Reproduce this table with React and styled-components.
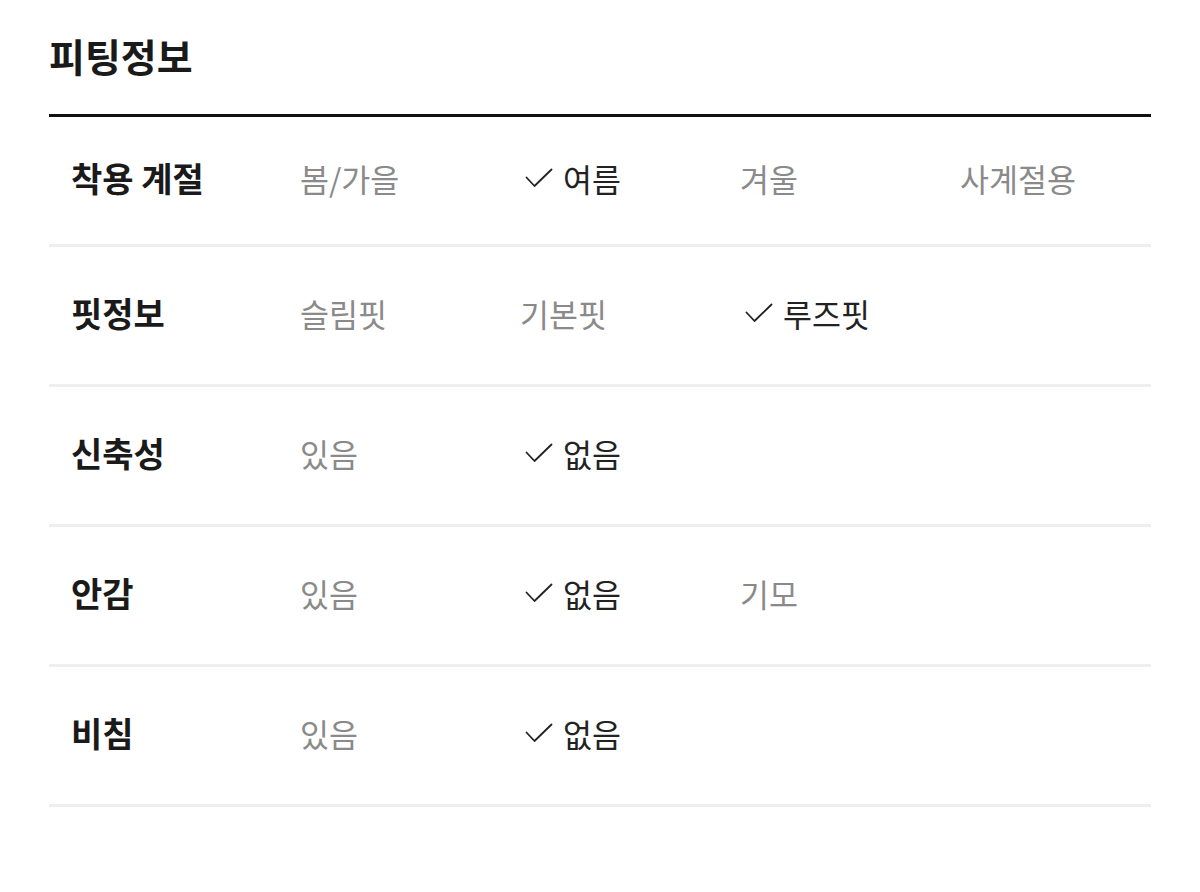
import styled, { createGlobalStyle } from 'styled-components'

const GlobalStyle = createGlobalStyle`
  html, body {
    margin: 0;
    padding: 0;
    background: #fff;
  }
  body {
    font-family: "Noto Sans CJK KR", "Noto Sans", sans-serif;
    color: #222;
  }
`

const Section = styled.section`
  width: 1102px;
  padding: 24px 49px 0;
`

const Title = styled.h2`
  margin: 0;
  font-size: 39px;
  font-weight: 700;
  line-height: 62px;
  color: #1a1a1a;
  padding-bottom: 28px;
  border-bottom: 3px solid #111;
`

const Row = styled.div`
  display: flex;
  align-items: center;
  box-sizing: border-box;
  height: ${p => (p.first ? '130px' : '140px')};
  padding: 0 0 6px 22px;
  border-bottom: 3px solid #eeeeee;
`

const Label = styled.div`
  flex: 0 0 229px;
  font-size: 34px;
  font-weight: 700;
  color: #1a1a1a;
`

const Option = styled.div`
  flex: 0 0 220px;
  display: flex;
  align-items: center;
  font-size: 31.5px;
  font-weight: 400;
  white-space: nowrap;
  color: ${p => (p.checked ? '#222' : '#8a8a8a')};
`

const Check = styled.svg`
  width: 28px;
  height: 20px;
  margin: 0 10px 0 5px;
  flex-shrink: 0;
`

const CheckIcon = () => (
  <Check viewBox="0 0 28 20" fill="none">
    <path d="M1.5 9.5 L9.5 18 L26.5 1.5" stroke="#222" strokeWidth="1.8" strokeLinecap="round" strokeLinejoin="round" />
  </Check>
)

const rows = [
  { label: '착용 계절', options: ['봄/가을', '여름', '겨울', '사계절용'], checked: '여름' },
  { label: '핏정보', options: ['슬림핏', '기본핏', '루즈핏'], checked: '루즈핏' },
  { label: '신축성', options: ['있음', '없음'], checked: '없음' },
  { label: '안감', options: ['있음', '없음', '기모'], checked: '없음' },
  { label: '비침', options: ['있음', '없음'], checked: '없음' },
]

const App = () => {
  return (
    <>
      <GlobalStyle />
      <Section>
        <Title>피팅정보</Title>
        {rows.map((row, i) => (
          <Row key={row.label} first={i === 0}>
            <Label>{row.label}</Label>
            {row.options.map(opt => (
              <Option key={opt} checked={opt === row.checked}>
                {opt === row.checked && <CheckIcon />}
                {opt}
              </Option>
            ))}
          </Row>
        ))}
      </Section>
    </>
  )
}

export default App
